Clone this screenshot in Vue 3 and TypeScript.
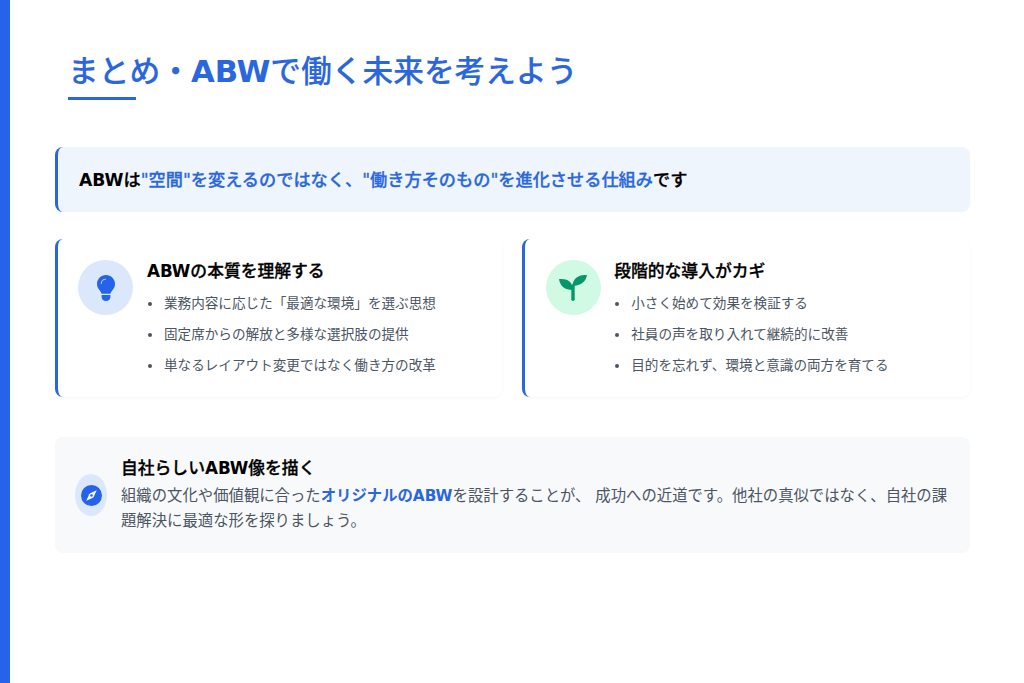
<script setup lang="ts">
interface Card { lead: string; title: string; tone: string; items: string[] }
const cards: Card[] = [
  { lead: 'ABW', title: 'の本質を理解する', tone: 'blue', items: ['業務内容に応じた「最適な環境」を選ぶ思想', '固定席からの解放と多様な選択肢の提供', '単なるレイアウト変更ではなく働き方の改革'] },
  { lead: '', title: '段階的な導入がカギ', tone: 'green', items: ['小さく始めて効果を検証する', '社員の声を取り入れて継続的に改善', '目的を忘れず、環境と意識の両方を育てる'] },
]
</script>

<template>
  <div class="slide">
    <div class="bar"></div>
    <main class="main">
      <h1 class="title">まとめ・<b>ABW</b>で働く未来を考えよう</h1>
      <section class="banner">
        <span><b>ABW</b>は<span class="hl">"空間"を変えるのではなく、"働き方そのもの"を進化させる仕組み</span>です</span>
      </section>
      <section class="cards">
        <article v-for="c in cards" :key="c.title" class="card">
          <div class="icon" :class="c.tone">
            <svg v-if="c.tone === 'blue'" width="18" height="26" viewBox="0 0 18 26">
              <path fill="#2563eb" d="M9 0C4 0 0 4 0 8.900c0 2.300.9 4.200 2.200 5.800 1 1.200 2 2.500 2.400 4h8.800c.4-1.500 1.400-2.800 2.400-4C17.100 13.100 18 11.200 18 8.900 18 4 14 0 9 0z"/>
              <path fill="#2563eb" d="M4.600 20h8.800v1.900c0 2.300-1.900 4.100-4.400 4.100s-4.400-1.800-4.400-4.100z"/>
              <path fill="none" stroke="#a9c5fa" stroke-width="1.100" stroke-linecap="round" d="M4.300 8.500c0-2.400 2-4.300 4.300-4.300"/>
            </svg>
            <svg v-else width="28" height="26" viewBox="0 0 28 26">
              <path fill="#059669" d="M0 4c7.500-.7 13.500 1.800 14.300 11C6.500 15.300 1 11.500 0 4z"/>
              <path fill="#059669" d="M28 0c-7.500-.4-13.800 2.400-14.600 10.800C21 11 26.800 7.300 28 0z"/>
              <path fill="none" stroke="#059669" stroke-width="3.400" stroke-linecap="round" d="M14 11v13.300"/>
            </svg>
          </div>
          <div class="body">
            <h2 class="card-title"><b v-if="c.lead">{{ c.lead }}</b>{{ c.title }}</h2>
            <ul class="list">
              <li v-for="i in c.items" :key="i">{{ i }}</li>
            </ul>
          </div>
        </article>
      </section>
      <section class="note">
        <div class="note-icon">
          <svg width="21" height="21" viewBox="0 0 21 21">
            <circle cx="10.500" cy="10.500" r="10.500" fill="#2563eb"/>
            <path fill="#fff" d="M15.700 5.300l-2.900 6.500-1 1-6.500 2.900 2.900-6.500 1-1z"/>
            <circle cx="10.500" cy="10.500" r="1.300" fill="#2563eb"/>
          </svg>
        </div>
        <div class="note-body">
          <h3 class="note-title">自社らしい<b>ABW</b>像を描く</h3>
          <p class="note-text">組織の文化や価値観に合った<b>オリジナルのABW</b>を設計することが、 成功への近道です。他社の真似ではなく、自社の課題解決に最適な形を探りましょう。</p>
        </div>
      </section>
    </main>
  </div>
</template>

<style>
html, body { margin: 0; background: #fff; }
</style>

<style scoped>
.slide {
  display: flex;
  width: 1024px;
  height: 683px;
  overflow: hidden;
  font-family: "DejaVu Sans", "Noto Sans CJK JP", sans-serif;
  background: #fff;
}
.bar { width: 10px; flex: none; background: #2563eb; }
.main {
  flex: 1;
  min-width: 0;
  padding: 49px 54.5px 0 45px;
  display: flex;
  flex-direction: column;
}
.title {
  position: relative;
  align-self: flex-start;
  margin: 0 0 47px 13px;
  padding-bottom: 7px;
  font-size: 30.72px;
  line-height: 44px;
  font-weight: 500;
  -webkit-text-stroke: 0.15px currentColor;
  color: #2a66dc;
}
.title b { font-weight: 700; -webkit-text-stroke: 0; }
.title::after {
  content: "";
  position: absolute;
  left: 0;
  bottom: 0;
  width: 68px;
  height: 3px;
  background: #2a66dc;
}
.banner {
  height: 65px;
  box-sizing: border-box;
  display: flex;
  align-items: center;
  padding-left: 21px;
  padding-bottom: 2px;
  background: #eff5fd;
  border-left: 3px solid #2a66dc;
  border-radius: 8px;
  font-size: 17.2px;
  font-weight: 500;
  -webkit-text-stroke: 0.3px currentColor;
  color: #000;
}
.banner b { font-weight: 700; -webkit-text-stroke: 0; }
.hl { color: #2a66dc; }
.cards {
  display: grid;
  grid-template-columns: 1fr 1fr;
  gap: 20px;
  margin-top: 27px;
}
.card {
  height: 158px;
  box-sizing: border-box;
  display: flex;
  gap: 13.6px;
  padding: 21px 16px 0 20.4px;
  background: #fff;
  border-left: 3px solid #2a66dc;
  border-radius: 8px;
  box-shadow: 0 1px 3px rgba(0, 0, 0, 0.04);
}
.icon {
  width: 55px;
  height: 55px;
  flex: none;
  border-radius: 50%;
  display: flex;
  align-items: center;
  justify-content: center;
}
.icon.blue { background: #dbe8fc; }
.icon.green { background: #d1fae5; }
.card-title {
  margin: 0;
  font-size: 16.8px;
  line-height: 22px;
  font-weight: 500;
  -webkit-text-stroke: 0.3px currentColor;
  color: #000;
}
.card-title b, .note-title b { font-weight: 700; -webkit-text-stroke: 0; }
.list {
  list-style: none;
  margin: 12px 0 0;
  padding: 0;
}
.list li {
  position: relative;
  padding-left: 17px;
  font-size: 13.6px;
  line-height: 19px;
  margin-bottom: 12px;
  color: #4b5563;
}
.list li::before {
  content: "";
  position: absolute;
  left: 1px;
  top: 8px;
  width: 4px;
  height: 4px;
  border-radius: 50%;
  background: #4b5563;
}
.note {
  height: 116px;
  box-sizing: border-box;
  margin-top: 40px;
  display: flex;
  align-items: center;
  gap: 14px;
  padding: 0 20px;
  background: #f8f9fa;
  border-radius: 8px;
}
.note-icon {
  width: 32px;
  height: 42px;
  flex: none;
  border-radius: 50%;
  background: #dbe8fc;
  display: flex;
  align-items: center;
  justify-content: center;
}
.note-title {
  margin: 0 0 4px;
  font-size: 16.8px;
  line-height: 24px;
  font-weight: 500;
  -webkit-text-stroke: 0.3px currentColor;
  color: #000;
}
.note-text {
  margin: 0;
  font-size: 15.36px;
  line-height: 25px;
  color: #4b5563;
}
.note-text b { color: #2a66dc; font-weight: 700; }
</style>
